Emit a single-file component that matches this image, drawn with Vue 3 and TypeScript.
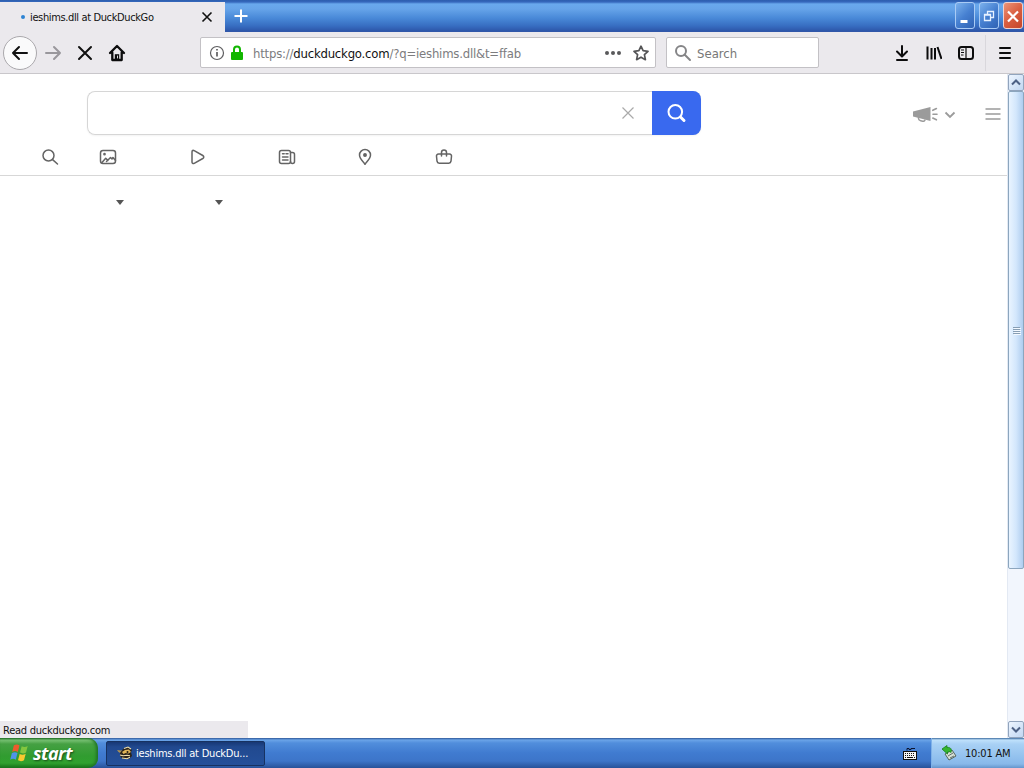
<script setup lang="ts">
import { ref } from 'vue'

const title = ref('ieshims.dll at DuckDuckGo')
const taskTitle = ref('ieshims.dll at DuckDu...')
const clock = ref('10:01 AM')
const query = ref('')
</script>

<template>
  <div class="screen">
    <header class="titlebar">
      <div class="tab">
        <i class="dot"></i>
        <span class="tab-title">{{ title }}</span>
        <svg class="tab-close" width="12" height="12" viewBox="0 0 12 12"><path d="M1.500 1.500l9 9M10.500 1.500l-9 9" stroke="#111" stroke-width="1.600" /></svg>
      </div>
      <svg class="new-tab" width="16" height="16" viewBox="0 0 16 16"><path d="M8 1.500v13M1.500 8h13" stroke="#fff" stroke-width="2" /></svg>
      <div class="win-buttons">
        <button class="wb" aria-label="Minimize"><svg width="18" height="24" viewBox="0 0 18 24"><path d="M4.500 17.500h7" stroke="#fff" stroke-width="3" /></svg></button>
        <button class="wb" aria-label="Restore">
          <svg width="18" height="24" viewBox="0 0 18 24" fill="none" stroke="#e6f1ff"><path d="M7.500 10V7.500h6v6H11M7 7.500h7" stroke-width="1.300" /><path d="M4.500 10.500h6v6h-6zM4 11h7" stroke-width="1.300" /></svg>
        </button>
        <button class="wb close" aria-label="Close"><svg width="18" height="24" viewBox="0 0 18 24"><path d="M4 7.500l10 10M14 7.500l-10 10" stroke="#fff" stroke-width="2.200" /></svg></button>
      </div>
    </header>

    <nav class="navbar">
      <button class="back" aria-label="Back">
        <svg width="18" height="18" viewBox="0 0 18 18" fill="none" stroke="#111" stroke-width="2" stroke-linecap="round" stroke-linejoin="round"><path d="M16 9H2M8 3L2 9l6 6" /></svg>
      </button>
      <svg class="forward" width="18" height="18" viewBox="0 0 18 18" fill="none" stroke="#99979c" stroke-width="2" stroke-linecap="round" stroke-linejoin="round"><path d="M2 9h14M10 3l6 6-6 6" /></svg>
      <svg class="stop" width="16" height="16" viewBox="0 0 16 16" stroke="#111" stroke-width="2" stroke-linecap="round"><path d="M2 2l12 12M14 2L2 14" /></svg>
      <svg class="home" width="18" height="18" viewBox="0 0 18 18" fill="none" stroke="#0c0c0d" stroke-width="2.300" stroke-linejoin="round" stroke-linecap="round"><path d="M2 9l7-7 7 7M4.300 8.500V16h9.400V8.500" /><path d="M6.800 16v-5.800h4.400V16z" fill="#0c0c0d" stroke="none" /><path d="M9.500 12v2" stroke="#ddd" stroke-width="1" /></svg>
      <div class="urlbar">
        <svg width="16" height="16" viewBox="0 0 16 16" fill="none" stroke="#5e5e60"><circle cx="8" cy="8" r="6.500" stroke-width="1.200" /><path d="M8 7v4.500M8 4v1.600" stroke-width="1.700" /></svg>
        <svg class="lock" width="12" height="16" viewBox="0 0 12 16"><path d="M3 8V4.500a3 3 0 0 1 6 0V8" fill="none" stroke="#12b600" stroke-width="2" /><rect y="7" width="12" height="8" rx="1" fill="#12b600" /></svg>
        <span class="url">https://<b>duckduckgo.com</b>/?q=ieshims.dll&amp;t=ffab</span>
        <svg class="dots" width="16" height="6" viewBox="0 0 16 6" fill="#59595b"><circle cx="2" cy="3" r="2" /><circle cx="8" cy="3" r="2" /><circle cx="14" cy="3" r="2" /></svg>
        <svg class="star" width="16" height="16" viewBox="0 0 16 16"><path d="M8 1.200l2.100 4.500 4.900.6-3.600 3.400 1 5L8 12.200l-4.400 2.500 1-5L1 6.300l4.900-.6z" fill="none" stroke="#555557" stroke-width="1.700" stroke-linejoin="round" /></svg>
      </div>
      <div class="searchbar">
        <svg width="18" height="18" viewBox="0 0 18 18" fill="none" stroke="#858587" stroke-width="2"><circle cx="7" cy="7" r="5" /><path d="M10.500 10.500L16 16" stroke-linecap="round" /></svg>
        <span>Search</span>
      </div>
      <div class="tools">
        <svg width="16" height="18" viewBox="0 0 16 18" fill="none" stroke="#0c0c0d" stroke-width="2" stroke-linecap="round" stroke-linejoin="round"><path d="M8 2v10M3 7.500L8 12.500l5-5M3 16h10" /></svg>
        <svg width="16" height="16" viewBox="0 0 16 16" stroke="#0c0c0d" stroke-width="2"><path d="M1.500 1.500v13M5.500 3v11.500M9 3v11.500M11.500 2l4 12" /></svg>
        <svg width="16" height="16" viewBox="0 0 16 16" fill="none" stroke="#0c0c0d"><rect x="1" y="2" width="14" height="12" rx="2.500" stroke-width="2" /><path d="M8 2v12M3 5h3M3 7.500h3M3 10h2.500" stroke-width="1.200" /></svg>
        <i class="sep"></i>
        <svg class="menu" width="14" height="14" viewBox="0 0 14 14" stroke="#0c0c0d" stroke-width="2" stroke-linecap="round"><path d="M2 2h10M2 7h10M2 12h10" /></svg>
      </div>
    </nav>

    <div class="viewport">
      <main class="page">
        <div class="search-row">
          <form class="ddg-search" @submit.prevent>
            <input v-model="query" aria-label="Query" />
            <svg class="clear" width="14" height="14" viewBox="0 0 14 14"><path d="M1.500 1.500l11 11M12.500 1.500l-11 11" stroke="#aaa" stroke-width="1.200" /></svg>
            <button class="go" aria-label="Search">
              <svg width="20" height="20" viewBox="0 0 20 20" fill="none" stroke="#fff" stroke-linecap="round"><circle cx="8.300" cy="8.800" r="6.800" stroke-width="2" /><path d="M13.500 14l3.500 3.500" stroke-width="3" /></svg>
            </button>
          </form>
          <svg class="megaphone" width="26" height="18" viewBox="0 0 26 18" fill="#9b9b9b"><path d="M1 6.500L18.500 2v14L1 11.500z" /><path d="M6.500 12v1.500c0 1.200 1 1.900 2.200 2.200l2 .6c1.300.2 2.300-.5 2.300-1.800" fill="none" stroke="#9b9b9b" stroke-width="1.500" /><path d="M20.800 5.300l3.600-1.800M21 9.200h4M20.800 13l3.600 1.800" stroke="#9b9b9b" stroke-width="1.600" stroke-linecap="round" /></svg>
          <svg class="chev" width="12" height="8" viewBox="0 0 12 8" fill="none" stroke="#9b9b9b" stroke-width="1.800"><path d="M1.500 1.500L6 6l4.500-4.500" /></svg>
          <svg class="ddg-menu" width="16" height="14" viewBox="0 0 16 14" stroke="#9b9b9b" stroke-width="1.700"><path d="M.5 2h15M.5 7h15M.5 12h15" /></svg>
        </div>

        <div class="verticals">
          <svg class="v-all" viewBox="0 0 18 18"><circle cx="7.500" cy="7.500" r="5.500" /><path d="M11.600 11.600L16.500 16" /></svg>
          <svg class="v-images" viewBox="0 0 18 18"><rect x="1.500" y="2.500" width="15" height="13" rx="2.500" /><path d="M3 14.500l3.700-4.300 2.200 2.200M7.500 13.500l4-4 1.500 1.500 1-1.500 2.500 3" /><circle cx="5.500" cy="6.200" r=".6" /></svg>
          <svg class="v-videos" viewBox="0 0 18 18"><path d="M3 4v10c0 1.500 1 1.900 2.200 1.300l8.600-4.800c1.300-.8 1.300-2.200 0-3L5.200 2.700C4 2 3 2.500 3 4z" /></svg>
          <svg class="v-news" viewBox="0 0 18 18"><rect x="1.500" y="2.500" width="11" height="13" rx="2" /><path d="M12.500 4.500h2a2 2 0 0 1 2 2V13.500a2 2 0 0 1-4 0M4.500 5.800h1.700M8 5.800h2M4.500 9h5.500M4.500 12h5.500" /></svg>
          <svg class="v-maps" viewBox="0 0 18 18"><path d="M9 16.300C7.500 13.500 3.500 11 3.500 7a5.500 5.500 0 0 1 11 0c0 4-4 6.500-5.500 9.300z" /><circle cx="9" cy="7" r="1.200" fill="#646464" /></svg>
          <svg class="v-shop" viewBox="0 0 18 18"><path d="M3.500 6h11c1.300 0 2.200 1 2 2.200l-.5 5c-.2 1.300-.9 2-2.200 2H4.200c-1.300 0-2-.7-2.200-2l-.5-5C1.300 7 2.200 6 3.500 6zM6.500 8V4.500a2.500 2.500 0 0 1 5 0V8" /></svg>
        </div>

        <div class="filters"><i class="caret"></i><i class="caret"></i></div>
        <div class="status">Read duckduckgo.com</div>
      </main>

      <aside class="scrollbar">
        <button class="sb-btn" aria-label="Scroll up"><svg width="10" height="7" viewBox="0 0 10 7"><path d="M1 5.500l4-4 4 4" fill="none" stroke="#4d6185" stroke-width="2" /></svg></button>
        <div class="thumb"><i></i><i></i><i></i><i></i></div>
        <div class="track"></div>
        <button class="sb-btn" aria-label="Scroll down"><svg width="10" height="7" viewBox="0 0 10 7"><path d="M1 1.500l4 4 4-4" fill="none" stroke="#4d6185" stroke-width="2" /></svg></button>
      </aside>
    </div>

    <footer class="taskbar">
      <button class="start">
        <svg width="20" height="20" viewBox="0 0 19 19">
          <path d="M3.700 2.200c2-1.300 3.700-1 5.300-.1L7.400 8.500C5.700 7.500 4 7.400 2.100 8.500z" fill="#ed5b2d" />
          <path d="M10.300 3c1.800 1 3.700 1 5.700-.1l-1.600 6.200c-2 1.100-3.900 1-5.700 0z" fill="#83c63f" transform="translate(.8 0)" />
          <path d="M1.800 9.600c2-1.100 3.700-1 5.300 0l-1.600 6.200c-1.700-1-3.400-1-5.300 0z" fill="#4e94e8" />
          <path d="M9.200 10.400c1.800 1 3.700 1 5.700-.1l-1.600 6.200c-2 1.100-3.900 1-5.700 0z" fill="#f8c930" />
        </svg>
        <span>start</span>
      </button>
      <button class="task">
        <svg width="16" height="16" viewBox="0 0 16 16">
          <path d="M0 5l4 .5L7 5 5 9 1.500 7z" fill="#ad9154" />
          <path d="M3 8l3-4 5-2 4 3-1 2 1 4-3 3H6l-3-3z" fill="#2a241c" />
          <path d="M5 7l3-2 4-.5 2 2.500-2.500 1.500-3-.5-2 1z" fill="#dfb456" />
          <path d="M3 10l3 .8 4-.5 3 .5M7 3.500l4-1.500 3 2M5 13l5 .7 3-1.500" fill="none" stroke="#f0dfab" stroke-width="1.100" />
          <circle cx="10.500" cy="7" r="1" fill="#201a12" />
        </svg>
        <span>{{ taskTitle }}</span>
      </button>
      <svg class="keyboard" width="14" height="14" viewBox="0 0 14 14"><path d="M4 3.500V1.500h2v1h2v-1h4" fill="none" stroke="#0a1430" /><rect x=".5" y="4.500" width="13" height="8" fill="#f4f4f4" stroke="#111" /><path d="M2 6.500h10M2 8.500h10" stroke="#111" stroke-dasharray="1 1" /><path d="M2 10.500h1M4 10.500h6M11 10.500h1" stroke="#111" /></svg>
      <div class="tray">
        <svg width="16" height="16" viewBox="0 0 16 16"><path d="M3 9l7-4 4 6-7 4z" fill="#d7dfd5" stroke="#53645d" /><path d="M6 11l5-3M8 13l4-2" stroke="#61716c" /><path d="M0 4l5-3.500v2c4-.5 5 2 4 5C8 6.500 7 6.500 5.500 7v2z" fill="#35b52f" stroke="#16821a" stroke-width=".8" /></svg>
        <span>{{ clock }}</span>
      </div>
    </footer>
  </div>
</template>

<style>
body { background: #fff; }
</style>

<style scoped>
* { box-sizing: border-box; }
.screen { width: 1024px; height: 768px; display: flex; flex-direction: column; overflow: hidden; background: #fff; font-family: "DejaVu Sans Condensed", "DejaVu Sans", sans-serif; font-stretch: condensed; font-size: 11px; color: #111; }
svg { display: block; flex: none; }
button { padding: 0; border: none; font: inherit; flex: none; }
span { white-space: nowrap; }

.titlebar { height: 32px; flex: none; display: flex; align-items: flex-start; background: linear-gradient(#2c5eae 0, #3568bd 2px, #69a9ed 4px, #66a4e9 9px, #4989d8 18px, #376dc1 26px, #2d56a9 31px, #3458a9 32px); }
.tab { width: 225px; height: 30px; margin-top: 2px; padding-left: 21px; display: flex; align-items: center; background: #ebe9ed; }
.dot { width: 4px; height: 4px; border-radius: 50%; background: #2d83d3; }
.tab-title { width: 124px; margin-left: 5px; letter-spacing: -.37px; }
.tab-close { margin-left: 47px; }
.new-tab { margin: 8px 0 0 8px; }
.win-buttons { display: flex; gap: 3px; margin: 2px 1px 0 auto; }
.wb { width: 20px; height: 27px; display: flex; align-items: center; justify-content: center; border: 1px solid #a9cbf5; border-radius: 3px; background: linear-gradient(135deg, #7bb1ec, #4680d1 50%, #2f62b4); }
.win-buttons { gap: 4px; }
.wb.close { border-color: #efd2cf; background: linear-gradient(135deg, #ec9579, #d95e40 50%, #c5462b); }

.navbar { height: 42px; flex: none; display: flex; align-items: center; padding: 0 5px 0 3px; background: #ebe9ed; border-bottom: 1px solid #c9c7cb; }
.back { width: 34px; height: 34px; border-radius: 50%; border: 1px solid #aaa8ac; background: #fafafb; display: flex; align-items: center; justify-content: center; }
.forward { margin-left: 7px; }
.stop { margin-left: 15px; }
.home { margin-left: 15px; }
.urlbar { width: 456px; height: 31px; margin-left: 74px; padding: 0 6px 0 8px; display: flex; align-items: center; background: #fff; border: 1px solid #c3c1c5; border-radius: 2px; }
.lock { margin-left: 6px; }
.url { width: 268px; margin-left: 10px; padding-top: 1px; font-size: 13px; letter-spacing: -.21px; color: #7c7c7e; }
.url b { font-weight: normal; color: #111; }
.dots { margin-left: auto; }
.star { margin-left: 12px; }
.searchbar { width: 153px; height: 31px; margin-left: 10px; padding-left: 7px; display: flex; align-items: center; gap: 5px; background: #fff; border: 1px solid #c3c1c5; border-radius: 2px; font-size: 13px; color: #777; }
.searchbar span { padding-top: 1px; }
.tools { margin-left: auto; display: flex; align-items: center; gap: 16px; }
.sep { width: 1px; height: 36px; background: #d9d7dc; margin-left: -5px; }
.menu { margin: 0 7px 0 -4px; }

.viewport { height: 664px; flex: none; display: flex; }
.page { flex: 1; display: flex; flex-direction: column; background: #fff; }
.search-row { height: 61px; padding: 17px 6px 0 87px; display: flex; align-items: flex-start; }
.ddg-search { width: 614px; height: 44px; display: flex; align-items: center; border: 1px solid #d6d6d6; border-right: none; border-radius: 8px; box-shadow: 0 1px 2px rgba(0,0,0,0.05); }
.ddg-search input { flex: 1; min-width: 0; border: none; outline: none; background: transparent; }
.clear { margin-right: 17px; }
.go { width: 49px; height: 44px; border-radius: 0 8px 8px 0; background: #3969ef; display: flex; align-items: center; justify-content: center; }
.megaphone { margin: 14px 0 0 211px; }
.chev { margin: 20px 0 0 6px; }
.ddg-menu { margin: 16px 0 0 auto; }
.verticals { height: 41px; padding: 13px 0 0 41px; display: flex; border-bottom: 1px solid #d7d7d7; }
.verticals svg { width: 18px; height: 18px; fill: none; stroke: #646464; stroke-width: 1.5; stroke-linejoin: round; stroke-linecap: round; }
.v-images { margin-left: 40px; }
.v-videos { margin-left: 72px; }
.v-news { margin-left: 71px; }
.v-maps { margin-left: 60px; }
.v-shop { margin-left: 61px; }
.filters { display: flex; gap: 91px; padding: 24px 0 0 116px; }
.caret { border: solid transparent; border-width: 5px 4px 0; border-top-color: #555; }
.status { width: 248px; height: 17px; margin-top: auto; padding-left: 3px; line-height: 19px; background: #ebe9ed; letter-spacing: -.25px; }

.scrollbar { width: 17px; display: flex; flex-direction: column; background: #f2f6fd; border-left: 1px solid #e3e9f3; }
.sb-btn { width: 16px; height: 17px; display: flex; align-items: center; justify-content: center; border: 1px solid #91a4bd; border-radius: 2px; background: linear-gradient(135deg, #edf5ff, #c1d7f2); }
.thumb { height: 478px; flex: none; border: 1px solid #8ca6be; border-radius: 2px; background: linear-gradient(90deg, #e9f4ff, #d3e7fc 50%, #afcdef); display: flex; flex-direction: column; align-items: center; justify-content: center; gap: 1px; }
.thumb i { width: 7px; height: 1px; background: #879eb4; box-shadow: 1px 1px #f3f9ff; }
.track { flex: 1; }

.taskbar { height: 30px; flex: none; display: flex; align-items: center; background: linear-gradient(#2e5797 0, #6ba4e8 2px, #518edc 5px, #407bd0 15px, #3d75c9 23px, #285299 30px); }
.start { width: 98px; height: 30px; padding-left: 10px; display: flex; align-items: center; gap: 3px; border-radius: 0 10px 10px 0; background: linear-gradient(#226c29 0, #79c274 2px, #45a043 6px, #319c30 18px, #30a12f 25px, #167219 30px); box-shadow: inset -2px 0 3px #217426; color: #fff; font: italic bold 18px "Open Sans", sans-serif; text-shadow: 1px 1px 2px #174d19; }
.start span { letter-spacing: -.5px; }
.task { width: 159px; height: 25px; margin-left: 8px; padding-left: 10px; display: flex; align-items: center; gap: 3px; color: #fff; background: linear-gradient(#173875, #21498f 5px, #24509a); border: 1px solid #173261; border-radius: 2px; letter-spacing: -.22px; }
.task span { padding-top: 1px; }
.keyboard { margin: 1px 0 0 auto; }
.tray { width: 93px; height: 30px; margin-left: 14px; padding-left: 10px; display: flex; align-items: center; gap: 7px; border-left: 1px solid #7eb1e9; background: linear-gradient(#3c6b9f 0, #bfe1fb 2px, #a9d1f5 6px, #91c0ee 20px, #88b8e9 26px, #6595cc 30px); letter-spacing: -.2px; }
</style>
